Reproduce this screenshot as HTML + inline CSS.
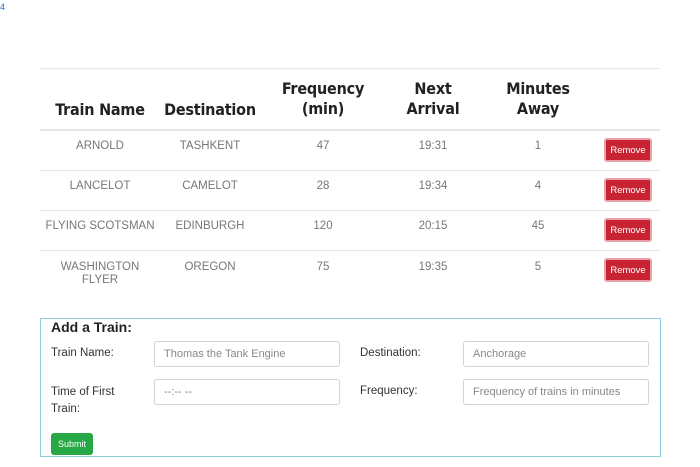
<!DOCTYPE html>
<html><head><style>
body{margin:0;width:700px;height:467px;background:#fff;font-family:"Liberation Sans",sans-serif;position:relative;overflow:hidden}
.a{position:absolute}
.h{font-family:"DejaVu Sans Condensed","DejaVu Sans",sans-serif;font-weight:bold;font-size:16px;color:#222;text-align:center;line-height:20px;letter-spacing:-0.2px}
.c{font-size:11.5px;color:#777;text-align:center;line-height:13px}
.ln{position:absolute;left:40px;width:620px;height:1px;background:#e3e6ea}
.btn{position:absolute;left:604px;width:48px;height:24px;background:#c82333;border:2px solid #e8a0a8;box-sizing:border-box;border-radius:3px;color:#fff;font-size:9.5px;text-align:center;line-height:21px}
.lb{font-size:11.5px;color:#333}
.in{position:absolute;border:1px solid #ced4da;border-radius:3px;box-sizing:border-box;height:26px;font-size:11px;color:#888;padding-left:9px;line-height:24px}
</style></head><body>
<div class="a" style="left:0;top:2px;font-size:9px;color:#2a6ebb">4</div>
<div class="ln" style="top:68px"></div>
<div class="a h" style="left:45px;width:110px;top:100px">Train Name</div>
<div class="a h" style="left:155px;width:110px;top:100px">Destination</div>
<div class="a h" style="left:268px;width:110px;top:79px">Frequency<br>(min)</div>
<div class="a h" style="left:378px;width:110px;top:79px">Next<br>Arrival</div>
<div class="a h" style="left:483px;width:110px;top:79px">Minutes<br>Away</div>
<div class="ln" style="top:129px;height:2px"></div>
<div class="ln" style="top:170px"></div>
<div class="ln" style="top:210px"></div>
<div class="ln" style="top:250px"></div>

<div class="a c" style="left:45px;width:110px;top:140px">ARNOLD</div>
<div class="a c" style="left:155px;width:110px;top:140px">TASHKENT</div>
<div class="a c" style="left:268px;width:110px;top:140px">47</div>
<div class="a c" style="left:378px;width:110px;top:140px">19:31</div>
<div class="a c" style="left:483px;width:110px;top:140px">1</div>
<div class="btn" style="top:138px">Remove</div>

<div class="a c" style="left:45px;width:110px;top:180px">LANCELOT</div>
<div class="a c" style="left:155px;width:110px;top:180px">CAMELOT</div>
<div class="a c" style="left:268px;width:110px;top:180px">28</div>
<div class="a c" style="left:378px;width:110px;top:180px">19:34</div>
<div class="a c" style="left:483px;width:110px;top:180px">4</div>
<div class="btn" style="top:178px">Remove</div>

<div class="a c" style="left:42px;width:116px;top:220px">FLYING SCOTSMAN</div>
<div class="a c" style="left:155px;width:110px;top:220px">EDINBURGH</div>
<div class="a c" style="left:268px;width:110px;top:220px">120</div>
<div class="a c" style="left:378px;width:110px;top:220px">20:15</div>
<div class="a c" style="left:483px;width:110px;top:220px">45</div>
<div class="btn" style="top:218px">Remove</div>

<div class="a c" style="left:45px;width:110px;top:261px">WASHINGTON<br>FLYER</div>
<div class="a c" style="left:155px;width:110px;top:261px">OREGON</div>
<div class="a c" style="left:268px;width:110px;top:261px">75</div>
<div class="a c" style="left:378px;width:110px;top:261px">19:35</div>
<div class="a c" style="left:483px;width:110px;top:261px">5</div>
<div class="btn" style="top:258px">Remove</div>

<div class="a" style="left:40px;top:318px;width:621px;height:139px;border:1px solid #8fcfdc;box-sizing:border-box"></div>
<div class="a" style="left:51px;top:319px;font-size:14px;font-weight:bold;color:#222">Add a Train:</div>
<div class="a lb" style="left:51px;top:347px">Train Name:</div>
<div class="in" style="left:154px;top:341px;width:186px">Thomas the Tank Engine</div>
<div class="a lb" style="left:360px;top:347px">Destination:</div>
<div class="in" style="left:463px;top:341px;width:186px">Anchorage</div>
<div class="a lb" style="left:51px;top:384px;line-height:17px">Time of First<br>Train:</div>
<div class="in" style="left:154px;top:379px;width:186px">--:-- --</div>
<div class="a lb" style="left:360px;top:385px">Frequency:</div>
<div class="in" style="left:463px;top:379px;width:186px">Frequency of trains in minutes</div>
<div class="a" style="left:51px;top:433px;width:42px;height:22px;background:#28a745;border-radius:3px;color:#fff;font-size:9px;text-align:center;line-height:22px">Submit</div>
</body></html>
